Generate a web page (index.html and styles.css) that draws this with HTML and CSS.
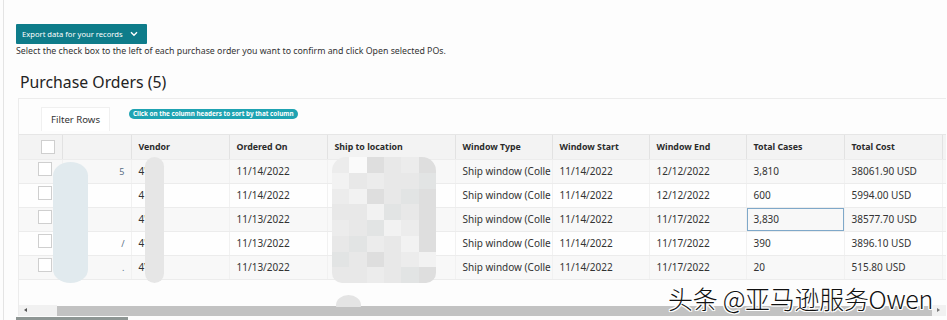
FILE: index.html
```html
<!DOCTYPE html>
<html>
<head>
<meta charset="utf-8">
<link rel="stylesheet" href="styles.css">
</head>
<body>
<div class="page">
  <div class="actions">
    <button class="export"><span class="export-label">Export data for your records</span><svg class="chev" width="8" height="6" viewBox="0 0 8 6"><path d="M1 1.2 L4 4.2 L7 1.2" fill="none" stroke="#fff" stroke-width="1.4"/></svg></button>
  </div>
  <p class="hint">Select the check box to the left of each purchase order you want to confirm and click Open selected POs.</p>
  <h1 class="title">Purchase Orders (5)</h1>
  <div class="panel">
    <div class="toolbar">
      <div class="tab">Filter Rows</div>
      <div class="pill">Click on the column headers to sort by that column</div>
    </div>
    <div class="table-wrap">
      <table class="grid">
        <colgroup>
          <col class="c-check"><col class="c-po"><col class="c-std"><col class="c-std"><col class="c-ship"><col class="c-win"><col class="c-win"><col class="c-win"><col class="c-std"><col class="c-std"><col class="c-more">
        </colgroup>
        <thead>
          <tr><th class="chk"><span class="box hbox"></span></th><th></th><th>Vendor</th><th>Ordered On</th><th>Ship to location</th><th>Window Type</th><th>Window Start</th><th>Window End</th><th>Total Cases</th><th>Total Cost</th><th></th></tr>
        </thead>
        <tbody>
          <tr><td class="chk"><span class="box"></span></td><td class="po">5</td><td>4'</td><td>11/14/2022</td><td></td><td>Ship window (Colle</td><td>11/14/2022</td><td>12/12/2022</td><td>3,810</td><td>38061.90 USD</td><td></td></tr>
          <tr><td class="chk"><span class="box"></span></td><td class="po"></td><td>4</td><td>11/14/2022</td><td></td><td>Ship window (Colle</td><td>11/14/2022</td><td>12/12/2022</td><td>600</td><td>5994.00 USD</td><td></td></tr>
          <tr><td class="chk"><span class="box"></span></td><td class="po"></td><td>4'</td><td>11/13/2022</td><td></td><td>Ship window (Colle</td><td>11/14/2022</td><td>11/17/2022</td><td class="focus">3,830</td><td>38577.70 USD</td><td></td></tr>
          <tr><td class="chk"><span class="box"></span></td><td class="po">/</td><td>4'</td><td>11/13/2022</td><td></td><td>Ship window (Colle</td><td>11/14/2022</td><td>11/17/2022</td><td>390</td><td>3896.10 USD</td><td></td></tr>
          <tr><td class="chk"><span class="box"></span></td><td class="po">.</td><td>4\</td><td>11/13/2022</td><td></td><td>Ship window (Colle</td><td>11/14/2022</td><td>11/17/2022</td><td>20</td><td>515.80 USD</td><td></td></tr>
        </tbody>
      </table>
      <div class="blur blur-po"></div>
      <div class="blur blur-vendor"></div>
      <div class="mosaic">
        <i></i><i></i><i></i><i></i><i></i><i></i>
        <i></i><i></i><i></i><i></i><i></i><i></i>
        <i></i><i></i><i></i><i></i><i></i><i></i>
        <i></i><i></i><i></i><i></i><i></i><i></i>
        <i></i><i></i><i></i><i></i><i></i><i></i>
        <i></i><i></i><i></i><i></i><i></i><i></i>
        <i></i><i></i><i></i><i></i><i></i><i></i>
        <i></i><i></i><i></i><i></i><i></i><i></i>
      </div>
      <div class="blob"></div>
    </div>
    <div class="hscroll">
      <div class="arrow left"></div>
      <div class="thumb"></div>
      <div class="arrow right"></div>
    </div>
  </div>
  <div class="pagebar"></div>
  <div class="watermark">头条 @亚马逊服务Owen</div>
</div>
</body>
</html>
```

FILE: styles.css
```css
* { box-sizing: border-box; }
html, body { margin: 0; padding: 0; background: #fdfdfd; }
body { width: 947px; height: 320px; overflow: hidden; font-family: "Noto Sans", "Open Sans", sans-serif; color: #333; }

.page {
  position: relative;
  height: 320px;
  margin-left: 3px;
  border-left: 1px solid #e4e4e4;
  padding: 24px 0 0 12px;
}

.actions { display: flex; }
.export {
  display: flex;
  align-items: center;
  height: 20px;
  width: 131px;
  padding: 0 0 0 6px;
  border: 0;
  border-radius: 1px;
  background: #0e7c8a;
  color: #fff;
  font-family: "Noto Sans", sans-serif;
  font-size: 7.6px;
  cursor: pointer;
}
.export-label { flex: 1; text-align: left; }
.chev { margin-right: 9px; }

.hint { margin: 1px 0 0; font-size: 8.8px; line-height: 12px; color: #333; }

.title {
  margin: 14px 0 0 4px;
  font-size: 15.8px;
  font-weight: 400;
  line-height: 22px;
  color: #232323;
}

.panel {
  position: relative;
  margin: 5px 0 0 2px;
  width: 928px;
  border-top: 1px solid #ececec;
  border-left: 1px solid #ececec;
  padding-top: 8px;
}

.toolbar { display: flex; align-items: flex-start; gap: 19px; padding-left: 22px; height: 27px; }
.tab {
  height: 24px;
  padding: 0 9px;
  display: flex;
  align-items: center;
  font-size: 9.6px;
  color: #333;
  background: #fff;
  border: 1px solid #f0f0f0;
  border-bottom: 0;
}
.pill {
  margin-top: 2px;
  height: 10px;
  padding: 0 4px;
  border-radius: 5px;
  background: #1fa3b2;
  color: #fff;
  font-size: 6.3px;
  font-weight: 700;
  line-height: 10px;
  white-space: nowrap;
}

.table-wrap { position: relative; overflow: hidden; height: 173px; border-top: 1px solid #e6e6e6; }
.grid { table-layout: fixed; border-collapse: collapse; width: 1000px; }
.c-check { width: 43px; }
.c-po { width: 69px; }
.c-std { width: 98px; }
.c-ship { width: 128px; }
.c-win { width: 97px; }
.c-more { width: 77px; }

.grid th, .grid td {
  height: 24px;
  padding: 0 0 0 7px;
  text-align: left;
  white-space: nowrap;
  overflow: hidden;
  font-size: 10px;
  color: #333;
  border-bottom: 1px solid #ececec;
}
.grid th {
  font-size: 8.8px;
  font-weight: 700;
  background: #f3f3f3;
  border-right: 1px solid #e2e2e2;
  color: #2b2b2b;
}
.grid td { border-right: 1px solid #f1f1f1; }
.grid tbody tr:nth-child(odd) td { background: #f8f8f8; }
.grid tbody tr:nth-child(even) td { background: #fefefe; }
.grid td.chk, .grid th.chk { padding: 0; }
.grid td.po { text-align: right; padding-right: 6px; color: #5a6f86; font-size: 9px; }
.grid td.focus { box-shadow: inset 0 0 0 1px #7fa8c9; }

.box { display: block; width: 14px; height: 14px; border: 1px solid #cfcfcf; background: #fff; margin-left: 19px; }
.hbox { margin-left: 22px; }
.grid td .box { margin-top: -5px; }

.blur { position: absolute; border-radius: 18px / 14px; }
.blur-po { left: 34px; top: 27px; width: 35px; height: 121px; background: #e1eaee; }
.blur-vendor { left: 126px; top: 22px; width: 19px; height: 126px; background: #e6e6e6; border-radius: 10px / 10px; }

.mosaic {
  position: absolute;
  left: 313px; top: 22px;
  width: 104px; height: 126px;
  display: grid;
  grid-template-columns: repeat(6, 1fr);
  grid-template-rows: repeat(8, 1fr);
  border-radius: 14px 14px 10px 10px;
  overflow: hidden;
}
.mosaic i { background: #e8e8e8; }
.mosaic i:nth-child(3n) { background: #dedede; }
.mosaic i:nth-child(4n+1) { background: #ececec; }
.mosaic i:nth-child(5n+2) { background: #e2e4e4; }
.mosaic i:nth-child(7n) { background: #f2f2f2; }
.mosaic i:nth-child(2) { background: #fafafa; }
.blob { position: absolute; left: 317px; top: 160px; width: 25px; height: 20px; border-radius: 50%; background: #e4e4e4; }

.hscroll { display: flex; height: 11px; margin-top: -2px; }
.arrow { position: relative; background: #f1f1f1; }
.arrow.left { width: 38px; }
.arrow.right { width: 14px; }
.arrow::after { content: ""; position: absolute; top: 3px; border: 2.5px solid transparent; }
.arrow.left::after { left: 5px; border-right: 3px solid #555; border-left: 0; }
.arrow.right::after { left: 5px; border-left: 3px solid #777; border-right: 0; }
.thumb { flex: 1; background: #c2c2c2; margin-top: 1px; }

.pagebar { position: absolute; left: 12px; bottom: 0; width: 112px; height: 3px; background: #8e9694; }

.watermark {
  position: absolute;
  left: 664px;
  top: 280px;
  font-family: "Noto Sans CJK SC", sans-serif;
  font-size: 25px;
  font-weight: 300;
  color: #111;
  letter-spacing: -0.3px;
  text-shadow: 1px 0 0 #fff, -1px 0 0 #fff, 0 1px 0 #fff, 0 -1px 0 #fff, 1px 1px 0 #fff, -1px -1px 0 #fff, 1px -1px 0 #fff, -1px 1px 0 #fff;
  white-space: nowrap;
}
```
